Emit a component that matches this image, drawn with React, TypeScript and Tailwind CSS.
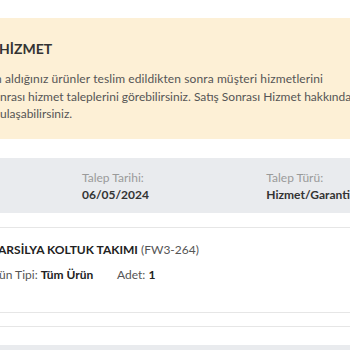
export default function App() {
  return (
    <div className="w-[350px] h-[350px] overflow-hidden bg-white font-['Lato',sans-serif] text-[#333]">
      {/* info box */}
      <div className="mt-[18px] h-[121px] bg-[#fdf0d6] pt-[21px] overflow-hidden">
        <div className="ml-[-1px] text-[14px] leading-[20px] font-bold text-[#333] whitespace-nowrap">HİZMET</div>
        <div className="mt-[11px] text-[12px] leading-[17.5px] text-[#555] whitespace-nowrap">
          <div className="ml-[-5px] tracking-[0.1px]">n aldığınız ürünler teslim edildikten sonra müşteri hizmetlerini</div>
          <div>nrası hizmet taleplerini görebilirsiniz. Satış Sonrası Hizmet hakkında bize</div>
          <div>ulaşabilirsiniz.</div>
        </div>
      </div>

      {/* request header */}
      <div className="mt-[19px] h-[55px] bg-[#e9ebee] flex pt-[11px] whitespace-nowrap text-[12px] leading-[17px]">
        <div className="ml-[82px] w-[186px]">
          <div className="text-[#9a9a9a]">Talep Tarihi:</div>
          <div className="font-bold text-[#333]">06/05/2024</div>
        </div>
        <div>
          <div className="text-[#9a9a9a]">Talep Türü:</div>
          <div className="font-bold text-[#333]">Hizmet/Garanti</div>
        </div>
      </div>

      {/* product */}
      <div className="mt-[14px] h-[86px] border-y border-[#e6e6e6] pt-[13px] whitespace-nowrap text-[12px] leading-[17px]">
        <div className="ml-[-2px]">
          <span className="font-bold text-[#222]">ARSİLYA KOLTUK TAKIMI</span>{" "}
          <span className="text-[#555]">(FW3-264)</span>
        </div>
        <div className="mt-[8px] ml-[-1px] flex text-[#555]">
          <span className="w-[118px]">
            ün Tipi: <span className="font-bold text-[#222]">Tüm Ürün</span>
          </span>
          <span>
            Adet: <span className="font-bold text-[#222]">1</span>
          </span>
        </div>
      </div>

      <div className="mt-[13px] h-[19px] border-t border-[#e6e6e6]" />
      <div className="h-[10px] bg-[#e9ebee]" />
    </div>
  );
}
